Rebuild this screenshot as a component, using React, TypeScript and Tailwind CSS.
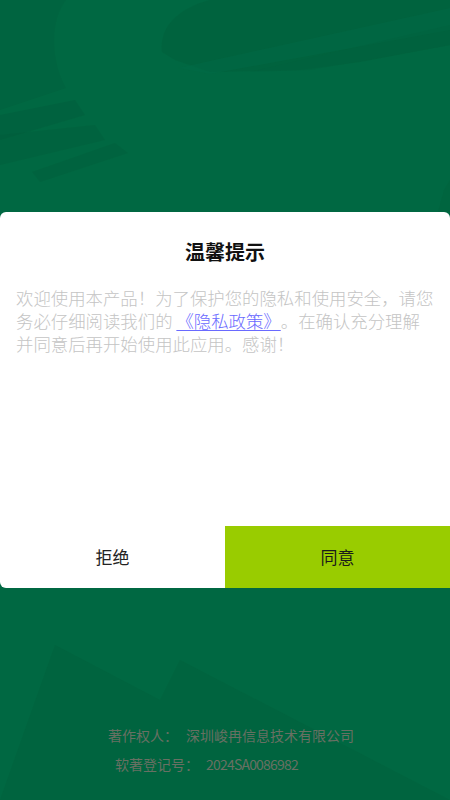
const Backdrop = () => (
  <svg
    className="absolute inset-0 h-full w-full"
    viewBox="0 0 450 800"
    preserveAspectRatio="none"
  >
    {/* faint shapes behind the dialog */}
    <path d="M0 0 H66 C50 20 50 60 66 88 L0 110 Z" fill="#005f3b" opacity="0.35" />
    <path d="M0 115 L75 100 L85 115 L0 140 Z" fill="#005a38" opacity="0.35" />
    <path d="M0 135 L95 125 L105 140 L0 165 Z" fill="#005a38" opacity="0.3" />
    <path d="M32 172 L115 143 L128 153 L40 182 Z" fill="#005a38" opacity="0.3" />
    <path d="M162 52 C158 20 190 5 210 0 H450 V45 L360 62 L300 70 L210 72 L175 60 Z" fill="#005d3a" opacity="0.4" />
    <path d="M178 68 L450 8 V30 L210 74 Z" fill="#006a45" opacity="0.5" />
    <path d="M250 72 L450 25 V45 L310 70 Z" fill="#00623e" opacity="0.4" />
    <path d="M0 800 L55 645 L160 700 L180 660 L450 800 Z" fill="#00603c" opacity="0.45" />
    <path d="M444 190 L450 180 V212 L438 212 Z" fill="#005a38" opacity="0.25" />
  </svg>
);

export default function App() {
  return (
    <div
      className="relative flex h-[800px] w-[450px] flex-col overflow-hidden bg-[#006842] [text-spacing-trim:space-all]"
      style={{ fontFamily: '"Noto Sans CJK SC", "Noto Sans", sans-serif' }}
    >
      <Backdrop />

      <div className="relative mt-[212px] flex h-[376px] flex-col rounded-t-md rounded-bl-md bg-white">
        <h1 className="mt-[26px] text-center text-[20px] font-bold leading-[28px] text-[#111]">
          温馨提示
        </h1>
        <p className="mt-[20px] whitespace-nowrap pl-4 text-[17.4px] font-light leading-[23px] text-[#c4c4c4]">
          欢迎使用本产品！为了保护您的隐私和使用安全，请您
          <br />
          务必仔细阅读我们的{' '}
          <span className="text-[#6a6aff] underline underline-offset-2">
            《隐私政策》
          </span>
          。在确认充分理解
          <br />
          并同意后再开始使用此应用。感谢！
        </p>

        <div className="mt-auto flex h-[62px]">
          <button className="flex-1 text-[17px] text-[#222]">拒绝</button>
          <button className="flex-1 bg-[#99cc00] text-[17px] text-[#1a1a1a]">
            同意
          </button>
        </div>
      </div>

      <div className="relative mt-auto mb-[26px] flex flex-col gap-[10px] text-[14px] leading-[19px] text-[#687063]">
        <div className="ml-[108px] flex gap-[8px]">
          <span>著作权人：</span>
          <span>深圳峻冉信息技术有限公司</span>
        </div>
        <div className="ml-[115px] flex items-center gap-[7px]">
          <span>软著登记号：</span>
          <span className="tracking-[-0.8px]">2024SA0086982</span>
        </div>
      </div>
    </div>
  );
}
